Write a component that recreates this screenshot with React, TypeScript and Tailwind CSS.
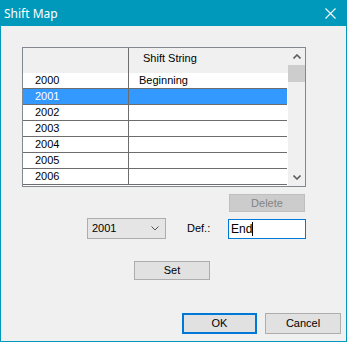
import React from 'react';

const rows = ['2000', '2001', '2002', '2003', '2004', '2005', '2006'];
const shift: Record<string, string> = { '2000': 'Beginning' };

const Chevron = ({ up = false, color = '#606060', w = 8, h = 5 }: { up?: boolean; color?: string; w?: number; h?: number }) => (
  <svg width={w} height={h} viewBox="0 0 8 5" className="block">
    <path d={up ? 'M0.5 4.5 L4 1 L7.5 4.5' : 'M0.5 0.5 L4 4 L7.5 0.5'} fill="none" stroke={color} strokeWidth={up || color === '#606060' ? 1.6 : 1} />
  </svg>
);

const App = () => {
  return (
    <div
      className="w-[347px] h-[342px] bg-[#f0f0f0] border border-[#0099bc] flex flex-col text-[11px] text-black"
      style={{ fontFamily: '"Liberation Sans", Arial, sans-serif' }}
    >
      {/* Title bar */}
      <div className="h-[25px] bg-[#0099bc] flex items-center justify-between pl-[3px] pr-[10px]">
        <span className="text-white text-[12px]" style={{ fontFamily: '"Noto Sans", sans-serif' }}>
          Shift Map
        </span>
        <svg width="11" height="11" viewBox="0 0 11 11">
          <path d="M0.5 0.5 L10.5 10.5 M10.5 0.5 L0.5 10.5" stroke="#fff" strokeWidth="1.1" />
        </svg>
      </div>

      {/* List view */}
      <div className="ml-[21px] mt-[21px] w-[284px] h-[140px] border border-[#828790] bg-white flex">
        <div className="w-[265px] flex flex-col">
          <div className="h-[25px] bg-[#f0f0f0] flex">
            <div className="w-[106px] border-r border-[#6d6d6d]" />
            <div className="pl-[14px] pt-[4px] leading-[13px]">Shift String</div>
          </div>
          {rows.map((r) => {
            const sel = r === '2001';
            return (
              <div key={r} className={`h-[16px] flex border-b border-[#6d6d6d] mr-[1px] ${sel ? 'bg-[#3399ff] text-white' : ''}`}>
                <div className="w-[106px] border-r border-[#6d6d6d] pl-[12px] leading-[15px]">{r}</div>
                <div className="pl-[10px] leading-[15px]">{shift[r] ?? ''}</div>
              </div>
            );
          })}
        </div>
        {/* Scrollbar */}
        <div className="w-[17px] bg-[#f0f0f0] flex flex-col">
          <div className="h-[17px] flex items-center justify-center">
            <Chevron up />
          </div>
          <div className="h-[17px] bg-[#cdcdcd]" />
          <div className="flex-1" />
          <div className="h-[17px] flex items-center justify-center">
            <Chevron />
          </div>
        </div>
      </div>

      {/* Delete */}
      <div className="mt-[7px] ml-[228px] w-[76px] h-[18px] bg-[#cccccc] border border-[#bfbfbf] text-[#838383] flex items-center justify-center">
        Delete
      </div>

      {/* Combo + Def */}
      <div className="mt-[6px] flex items-center">
        <div className="ml-[86px] w-[79px] h-[21px] bg-[#e5e5e5] border border-[#adadad] flex items-center justify-between pl-[4px] pr-[6px]">
          <span>2001</span>
          <Chevron color="#555" w={8} h={5} />
        </div>
        <span className="ml-[21px] w-[41px]">Def.:</span>
        <div className="w-[78px] h-[20px] bg-white border border-[#0078d7] flex items-center pl-[2px]">
          <span className="text-[12px]">End</span>
          <span className="w-px h-[14px] bg-black" />
        </div>
      </div>

      {/* Set */}
      <div className="mt-[22px] ml-[133px] w-[76px] h-[19px] bg-[#e1e1e1] border border-[#adadad] flex items-center justify-center">
        Set
      </div>

      {/* OK / Cancel */}
      <div className="mt-[33px] ml-[181px] flex gap-[8px]">
        <div className="w-[75px] h-[21px] bg-[#e1e1e1] border-2 border-[#0078d7] flex items-center justify-center">OK</div>
        <div className="w-[76px] h-[21px] bg-[#e1e1e1] border border-[#adadad] flex items-center justify-center">Cancel</div>
      </div>
    </div>
  );
};

export default App;
